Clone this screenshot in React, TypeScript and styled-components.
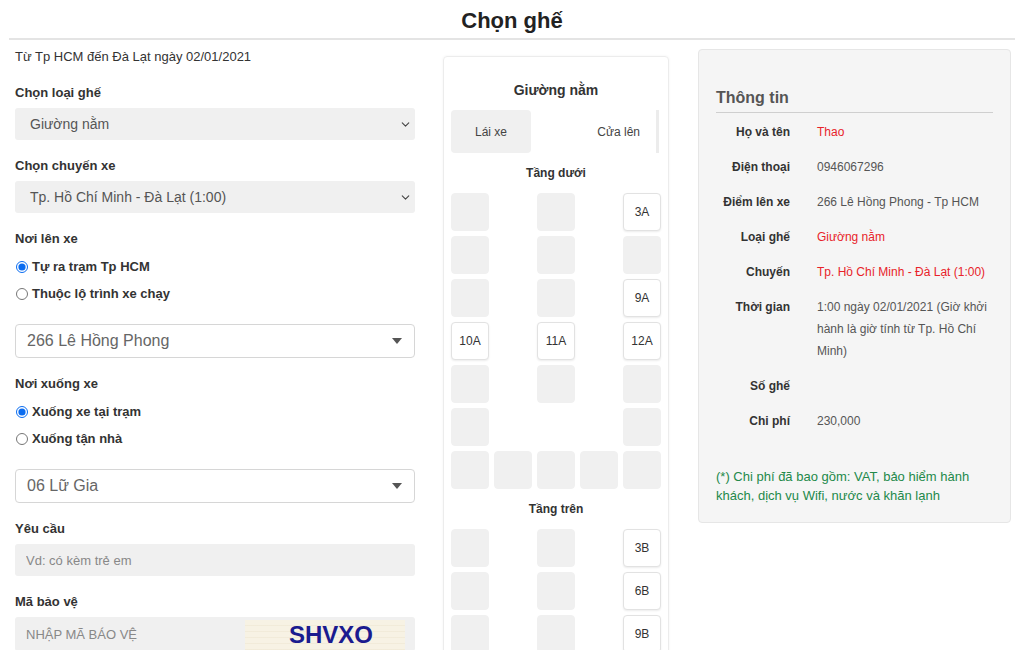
import styled, { createGlobalStyle } from "styled-components"
import { ChevronDown } from "lucide-react"

const GlobalStyle = createGlobalStyle`
    html, body {
        margin: 0;
        padding: 0;
        background: #ffffff;
        font-family: "Liberation Sans", Arial, sans-serif;
        color: #333333;
    }
    * {
        box-sizing: border-box;
    }
`

type Seat = string | null

const lowerFloor: Seat[][] = [
    ["", null, "", null, "3A"],
    ["", null, "", null, ""],
    ["", null, "", null, "9A"],
    ["10A", null, "11A", null, "12A"],
    ["", null, "", null, ""],
    ["", null, null, null, ""],
    ["", "", "", "", ""],
]

const upperFloor: Seat[][] = [
    ["", null, "", null, "3B"],
    ["", null, "", null, "6B"],
    ["", null, "", null, "9B"],
    ["", null, "", null, "12B"],
]

const info = [
    { label: "Họ và tên", value: "Thao", red: true },
    { label: "Điện thoại", value: "0946067296" },
    { label: "Điểm lên xe", value: "266 Lê Hồng Phong - Tp HCM" },
    { label: "Loại ghế", value: "Giường nằm", red: true },
    { label: "Chuyến", value: "Tp. Hồ Chí Minh - Đà Lạt (1:00)", red: true },
    {
        label: "Thời gian",
        value: "1:00 ngày 02/01/2021 (Giờ khởi hành là giờ tính từ Tp. Hồ Chí Minh)",
    },
    { label: "Số ghế", value: "" },
    { label: "Chi phí", value: "230,000" },
]

function SeatGrid({ rows }: { rows: Seat[][] }) {
    return (
        <Grid>
            {rows.flat().map((seat, i) =>
                seat === null ? (
                    <Empty key={i} />
                ) : (
                    <SeatBox key={i} free={seat !== ""}>
                        {seat}
                    </SeatBox>
                )
            )}
        </Grid>
    )
}

function Caret() {
    return (
        <svg width="10" height="6" viewBox="0 0 10 6">
            <path d="M0 0 L10 0 L5 6 Z" fill="#555" />
        </svg>
    )
}

function App() {
    return (
        <Page>
            <GlobalStyle />
            <Header>
                <Title>Chọn ghế</Title>
            </Header>
            <Body>
                <FormColumn>
                    <Intro>Từ Tp HCM đến Đà Lạt ngày 02/01/2021</Intro>

                    <Group>
                        <FieldLabel>Chọn loại ghế</FieldLabel>
                        <GraySelect>
                            <span>Giường nằm</span>
                            <ChevronDown size={13} strokeWidth={2} color="#444" />
                        </GraySelect>
                    </Group>

                    <Group>
                        <FieldLabel>Chọn chuyến xe</FieldLabel>
                        <GraySelect>
                            <span>Tp. Hồ Chí Minh - Đà Lạt (1:00)</span>
                            <ChevronDown size={13} strokeWidth={2} color="#444" />
                        </GraySelect>
                    </Group>

                    <Group>
                        <FieldLabel tight>Nơi lên xe</FieldLabel>
                        <RadioRow>
                            <input type="radio" name="pickup" defaultChecked />
                            Tự ra trạm Tp HCM
                        </RadioRow>
                        <RadioRow>
                            <input type="radio" name="pickup" />
                            Thuộc lộ trình xe chạy
                        </RadioRow>
                    </Group>

                    <BorderSelect>
                        <span>266 Lê Hồng Phong</span>
                        <Caret />
                    </BorderSelect>

                    <Group>
                        <FieldLabel tight>Nơi xuống xe</FieldLabel>
                        <RadioRow>
                            <input type="radio" name="dropoff" defaultChecked />
                            Xuống xe tại trạm
                        </RadioRow>
                        <RadioRow>
                            <input type="radio" name="dropoff" />
                            Xuống tận nhà
                        </RadioRow>
                    </Group>

                    <BorderSelect>
                        <span>06 Lữ Gia</span>
                        <Caret />
                    </BorderSelect>

                    <Group>
                        <FieldLabel>Yêu cầu</FieldLabel>
                        <TextInput placeholder="Vd: có kèm trẻ em" />
                    </Group>

                    <Group>
                        <FieldLabel>Mã bảo vệ</FieldLabel>
                        <CaptchaRow>
                            <CaptchaInput placeholder="NHẬP MÃ BÁO VỆ" />
                            <Captcha>SHVXO</Captcha>
                        </CaptchaRow>
                    </Group>
                </FormColumn>

                <BusCard>
                    <CardTitle>Giường nằm</CardTitle>
                    <FrontRow>
                        <Driver>Lái xe</Driver>
                        <Door>Cửa lên</Door>
                    </FrontRow>
                    <FloorTitle>Tầng dưới</FloorTitle>
                    <SeatGrid rows={lowerFloor} />
                    <FloorTitle>Tầng trên</FloorTitle>
                    <SeatGrid rows={upperFloor} />
                </BusCard>

                <InfoPanel>
                    <InfoTitle>Thông tin</InfoTitle>
                    <InfoList>
                        {info.map((row) => (
                            <InfoRow key={row.label}>
                                <InfoLabel>{row.label}</InfoLabel>
                                <InfoValue red={row.red}>{row.value}</InfoValue>
                            </InfoRow>
                        ))}
                    </InfoList>
                    <Note>
                        (*) Chi phí đã bao gồm: VAT, bảo hiểm hành khách, dịch vụ Wifi,
                        nước và khăn lạnh
                    </Note>
                </InfoPanel>
            </Body>
        </Page>
    )
}

export default App

const Page = styled.div`
    padding: 0 9px;
    height: 650px;
    overflow: hidden;
`

const Header = styled.div`
    height: 40px;
    padding-top: 3px;
    border-bottom: 2px solid #e4e4e4;
    display: flex;
    justify-content: center;
    align-items: center;
`

const Title = styled.h1`
    margin: 0;
    font-size: 22px;
    font-weight: bold;
    color: #222;
    line-height: 28px;
`

const Body = styled.div`
    display: flex;
    align-items: flex-start;
    padding-left: 6px;
`

const FormColumn = styled.div`
    width: 400px;
    padding-top: 8px;
    display: flex;
    flex-direction: column;
    gap: 17px;
`

const Intro = styled.div`
    font-size: 13px;
    line-height: 18px;
    color: #333;
    margin-bottom: 1px;
`

const Group = styled.div`
    display: flex;
    flex-direction: column;
`

const FieldLabel = styled.label<{ tight?: boolean }>`
    font-size: 13px;
    font-weight: bold;
    line-height: 18px;
    color: #333;
    margin-bottom: ${({ tight }) => (tight ? "5px" : "6px")};
`

const GraySelect = styled.div`
    height: 32px;
    background: #f0f0f0;
    border-radius: 3px;
    padding: 0 3px 0 15px;
    display: flex;
    justify-content: space-between;
    align-items: center;
    font-size: 14px;
    color: #555;
`

const RadioRow = styled.label`
    height: 27px;
    display: flex;
    align-items: center;
    font-size: 13px;
    font-weight: bold;
    color: #333;

    input {
        margin: 0 4px 0 1px;
        width: 12px;
        height: 12px;
        accent-color: #0a6cf0;
    }
`

const BorderSelect = styled.div`
    height: 34px;
    border: 1px solid #d6d6d6;
    border-radius: 4px;
    padding: 0 12px 0 11px;
    display: flex;
    justify-content: space-between;
    align-items: center;
    font-size: 16px;
    color: #666;
`

const TextInput = styled.input`
    height: 32px;
    border: none;
    outline: none;
    border-radius: 3px;
    background: #f0f0f0;
    padding: 0 11px;
    font-family: inherit;
    font-size: 13px;
    color: #333;

    &::placeholder {
        color: #888;
    }
`

const CaptchaRow = styled.div`
    height: 34px;
    background: #f0f0f0;
    border-radius: 3px;
    display: flex;
    align-items: flex-start;
    padding: 3px 10px 0 0;
`

const CaptchaInput = styled(TextInput)`
    flex: 1;
    height: 28px;
    background: transparent;
    min-width: 0;
`

const Captcha = styled.div`
    width: 160px;
    height: 40px;
    background: repeating-linear-gradient(
        180deg,
        #f7f2e4 0px,
        #f7f2e4 5px,
        #ece4cf 6px
    );
    color: #1b1b8f;
    font-size: 24px;
    font-weight: bold;
    text-align: center;
    line-height: 30px;
    padding-left: 12px;
`

const BusCard = styled.div`
    width: 226px;
    margin: 16px 0 0 28px;
    border: 1px solid #ececec;
    border-radius: 4px;
    padding: 0 7px 20px;
    box-shadow: 0 0 3px rgba(0, 0, 0, 0.05);
`

const CardTitle = styled.div`
    text-align: center;
    font-size: 14px;
    font-weight: bold;
    color: #333;
    padding: 24px 0 11px;
    line-height: 18px;
`

const FrontRow = styled.div`
    display: flex;
    height: 43px;
    padding-right: 2px;
`

const Driver = styled.div`
    width: 80px;
    background: #f0f0f0;
    border-radius: 4px;
    display: flex;
    justify-content: center;
    align-items: center;
    font-size: 12px;
    color: #444;
`

const Door = styled.div`
    flex: 1;
    display: flex;
    justify-content: flex-end;
    align-items: center;
    padding-right: 16px;
    font-size: 12px;
    color: #444;
    border-right: 3px solid #ececec;
`

const FloorTitle = styled.div`
    text-align: center;
    font-size: 12px;
    font-weight: bold;
    color: #333;
    line-height: 16px;
    padding: 12px 0 12px;
`

const Grid = styled.div`
    display: grid;
    grid-template-columns: repeat(5, 38px);
    grid-auto-rows: 38px;
    gap: 5px;
`

const Empty = styled.div``

const SeatBox = styled.div<{ free?: boolean }>`
    border-radius: 4px;
    background: ${({ free }) => (free ? "#ffffff" : "#f0f0f0")};
    border: 1px solid ${({ free }) => (free ? "#e2e2e2" : "#f0f0f0")};
    box-shadow: ${({ free }) => (free ? "0 1px 2px rgba(0,0,0,0.08)" : "none")};
    display: flex;
    justify-content: center;
    align-items: center;
    font-size: 12px;
    color: #333;
`

const InfoPanel = styled.div`
    width: 313px;
    margin: 9px 0 0 29px;
    height: 474px;
    background: #f5f5f5;
    border: 1px solid #e6e6e6;
    border-radius: 4px;
    padding: 37px 17px 0 17px;
`

const InfoTitle = styled.div`
    font-size: 16px;
    font-weight: bold;
    color: #555;
    line-height: 22px;
    padding-bottom: 3px;
    border-bottom: 1px solid #cfcfcf;
`

const InfoList = styled.div`
    padding-top: 1px;
`

const InfoRow = styled.div`
    display: grid;
    grid-template-columns: 74px 1fr;
    column-gap: 27px;
    padding: 6.5px 0;
    font-size: 12px;
    line-height: 22px;
`

const InfoLabel = styled.div`
    text-align: right;
    font-weight: bold;
    color: #333;
`

const InfoValue = styled.div<{ red?: boolean }>`
    color: ${({ red }) => (red ? "#e8232a" : "#555")};
    min-height: 22px;
`

const Note = styled.div`
    margin-top: 29px;
    font-size: 13px;
    line-height: 19px;
    color: #23894a;
`
